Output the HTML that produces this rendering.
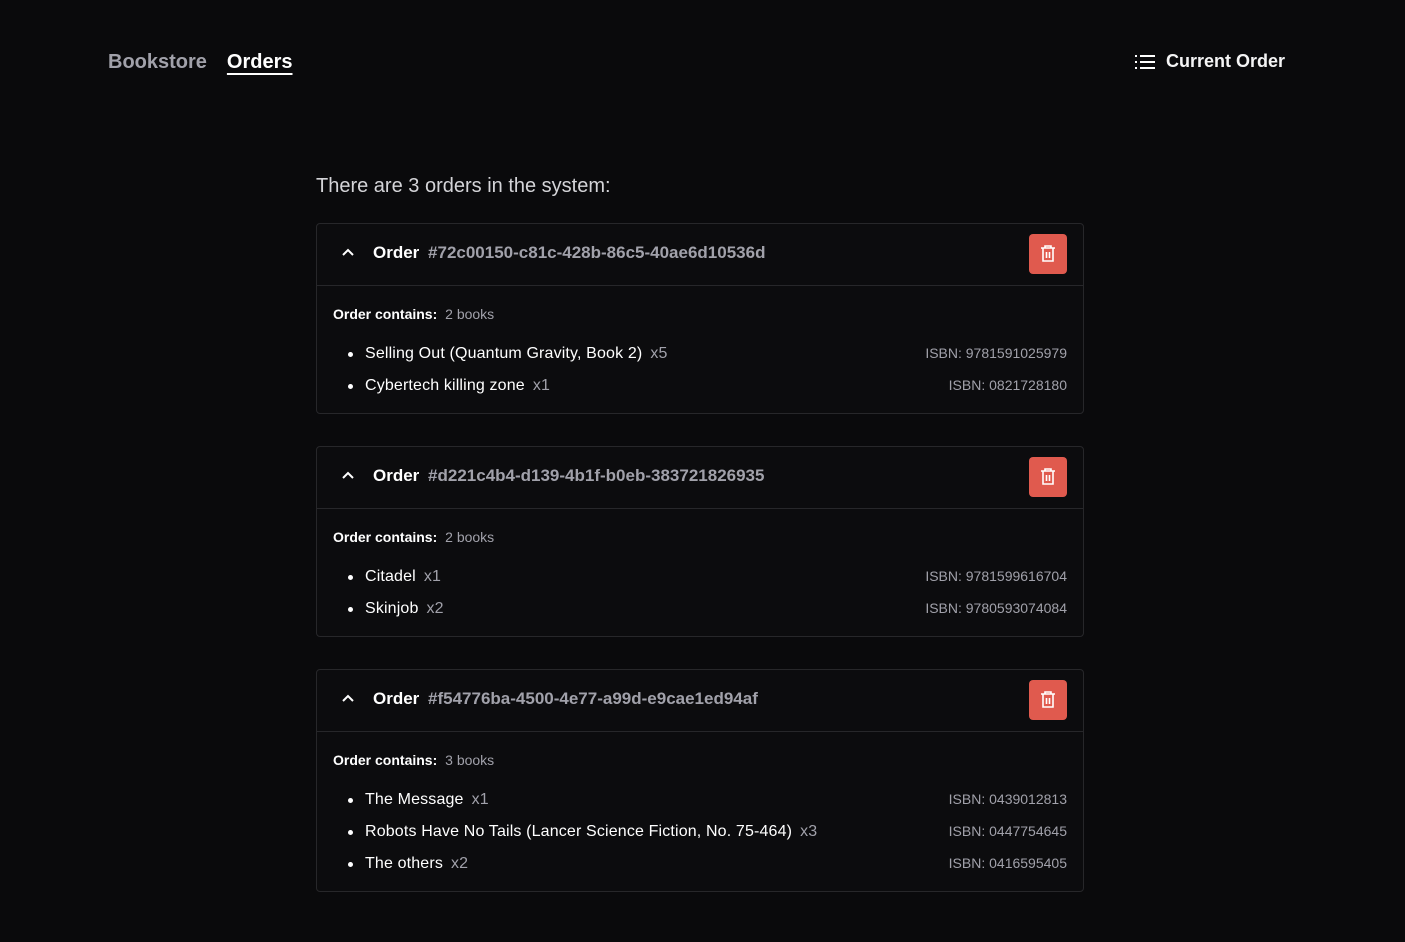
<!DOCTYPE html>
<html><head><meta charset="utf-8"><style>
*{box-sizing:border-box;margin:0;padding:0}
body{width:1405px;height:942px;background:#0a0a0c;font-family:"Liberation Sans",sans-serif;color:#f4f4f5;overflow:hidden;position:relative}
.nav{position:absolute;top:51px;left:108px;font-size:20px;font-weight:bold}
.nav .b{color:#a1a1aa;margin-right:20px}
.nav .o{color:#fff;text-decoration:underline;text-underline-offset:5px;text-decoration-thickness:2px}
.cur{position:absolute;top:51px;left:1134px;font-size:18px;font-weight:bold;display:flex;align-items:center;gap:10px}
.title{position:absolute;top:175px;left:316px;font-size:20px;color:#d4d4d8}
.card{position:absolute;left:316px;width:768px;border:1px solid #27272a;border-radius:4px;background:#0c0c0e}
.hd{height:62px;border-bottom:1px solid #27272a;display:flex;align-items:center;position:relative}
.hd .chev{position:absolute;left:24px;top:22px}
.hd .t{position:absolute;left:56px;top:19px;font-size:17px;font-weight:bold;color:#fff}
.hd .t span{color:#a1a1aa;margin-left:4px}
.del{position:absolute;right:16px;top:10px;width:38px;height:40px;background:#e05a4e;border-radius:4px;display:flex;align-items:center;justify-content:center}
.bd{padding:20px 16px 0 16px;position:relative}
.oc{font-size:14px;font-weight:bold;color:#fff;height:18px}
.oc span{color:#a1a1aa;font-weight:normal;margin-left:4px}
ul{list-style:none;margin-top:14px}
li{height:32px;display:flex;align-items:center;font-size:16px;color:#fff;position:relative;padding-left:32px;letter-spacing:0.15px}
li:before{content:"";position:absolute;left:15px;top:14px;width:5px;height:5px;border-radius:50%;background:#fff}
li .q{color:#a1a1aa;margin-left:8px}
li .i{position:absolute;right:0;top:7px;font-size:14px;color:#a1a1aa;letter-spacing:0}
</style></head><body>
<div class="nav"><span class="b">Bookstore</span><span class="o">Orders</span></div>
<div class="cur"><svg width="22" height="16" viewBox="0 0 22 16"><g stroke="#fff" stroke-width="2"><path d="M1 2h2M1 8h2M1 14h2M6 2h15M6 8h15M6 14h15"/></g></svg>Current Order</div>
<div class="title">There are 3 orders in the system:</div>

<div class="card" style="top:223px;height:191px">
<div class="hd"><svg class="chev" width="14" height="14" viewBox="0 0 14 14"><path d="M2 9l5-5 5 5" stroke="#fff" stroke-width="2" fill="none"/></svg><div class="t">Order <span>#72c00150-c81c-428b-86c5-40ae6d10536d</span></div>
<div class="del"><svg width="18" height="20" viewBox="0 0 18 20" fill="none" stroke="#fff" stroke-width="1.6"><path d="M2 4h14M6 4V2h6v2M4 4v13h10V4M7.5 8v6M10.5 8v6"/></svg></div></div>
<div class="bd"><div class="oc">Order contains: <span>2 books</span></div>
<ul><li>Selling Out (Quantum Gravity, Book 2)<span class="q">x5</span><span class="i">ISBN: 9781591025979</span></li>
<li>Cybertech killing zone<span class="q">x1</span><span class="i">ISBN: 0821728180</span></li></ul></div></div>

<div class="card" style="top:446px;height:191px">
<div class="hd"><svg class="chev" width="14" height="14" viewBox="0 0 14 14"><path d="M2 9l5-5 5 5" stroke="#fff" stroke-width="2" fill="none"/></svg><div class="t">Order <span>#d221c4b4-d139-4b1f-b0eb-383721826935</span></div>
<div class="del"><svg width="18" height="20" viewBox="0 0 18 20" fill="none" stroke="#fff" stroke-width="1.6"><path d="M2 4h14M6 4V2h6v2M4 4v13h10V4M7.5 8v6M10.5 8v6"/></svg></div></div>
<div class="bd"><div class="oc">Order contains: <span>2 books</span></div>
<ul><li>Citadel<span class="q">x1</span><span class="i">ISBN: 9781599616704</span></li>
<li>Skinjob<span class="q">x2</span><span class="i">ISBN: 9780593074084</span></li></ul></div></div>

<div class="card" style="top:669px;height:223px">
<div class="hd"><svg class="chev" width="14" height="14" viewBox="0 0 14 14"><path d="M2 9l5-5 5 5" stroke="#fff" stroke-width="2" fill="none"/></svg><div class="t">Order <span>#f54776ba-4500-4e77-a99d-e9cae1ed94af</span></div>
<div class="del"><svg width="18" height="20" viewBox="0 0 18 20" fill="none" stroke="#fff" stroke-width="1.6"><path d="M2 4h14M6 4V2h6v2M4 4v13h10V4M7.5 8v6M10.5 8v6"/></svg></div></div>
<div class="bd"><div class="oc">Order contains: <span>3 books</span></div>
<ul><li>The Message<span class="q">x1</span><span class="i">ISBN: 0439012813</span></li>
<li>Robots Have No Tails (Lancer Science Fiction, No. 75-464)<span class="q">x3</span><span class="i">ISBN: 0447754645</span></li>
<li>The others<span class="q">x2</span><span class="i">ISBN: 0416595405</span></li></ul></div></div>
</body></html>
